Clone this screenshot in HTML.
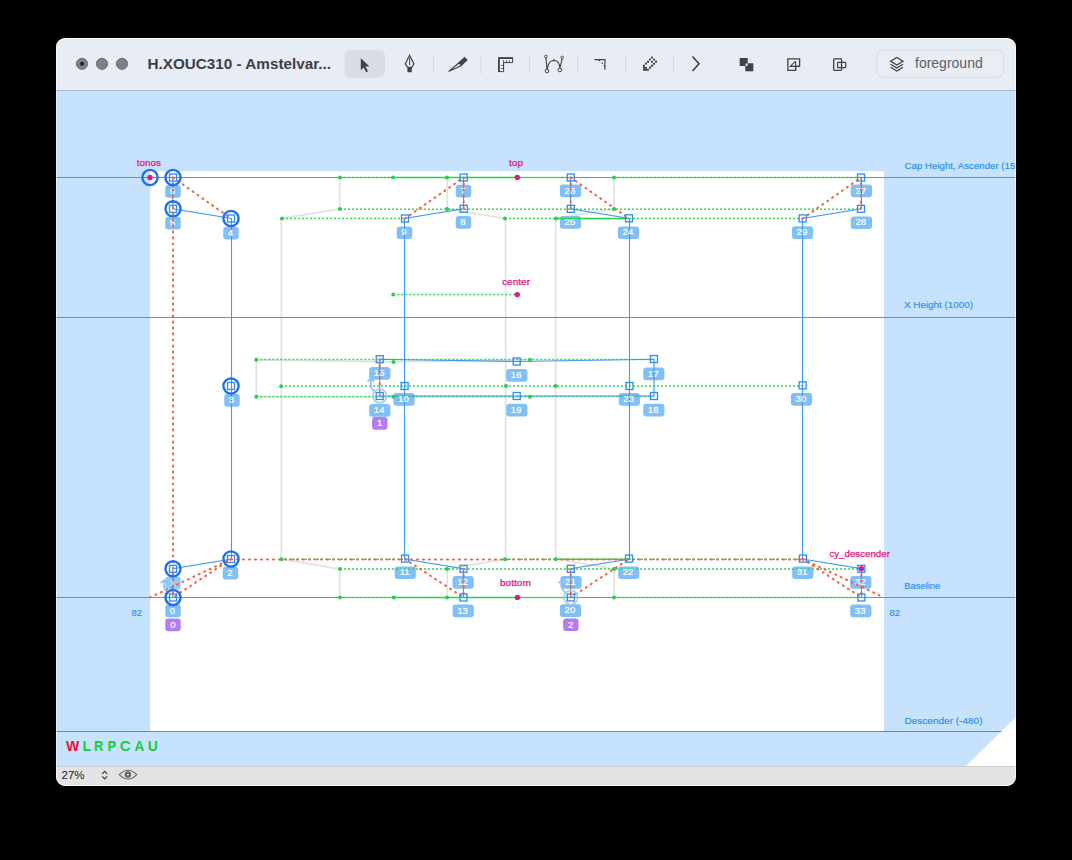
<!DOCTYPE html>
<html><head><meta charset="utf-8"><style>
html,body{margin:0;padding:0;background:#000;width:1072px;height:860px;overflow:hidden;}
svg{position:absolute;left:0;top:0;}
</style></head><body>
<svg width="1072" height="860" viewBox="0 0 1072 860">
<defs><clipPath id="win"><rect x="56" y="38" width="960" height="748" rx="9"/></clipPath></defs>
<rect x="0" y="0" width="1072" height="860" fill="#000"/>
<g clip-path="url(#win)">
<rect x="56" y="91" width="960" height="675" fill="#c7e2fd"/>
<rect x="150" y="171.2" width="734" height="560.3" fill="#ffffff"/>
<polyline points="339.7,177.5 339.7,209 281.3,218.5 281.3,559 339.7,569 339.7,597.5" fill="none" stroke="#e3e3e3" stroke-width="1.8" />
<polyline points="447.2,177.5 447.2,209 505.6,218.5 505.6,559 447.2,569 447.2,597.5" fill="none" stroke="#e3e3e3" stroke-width="1.8" />
<polyline points="614,177.5 614,209 555.7,218.5 555.7,559 614,569 614,597.5" fill="none" stroke="#e3e3e3" stroke-width="1.8" />
<polyline points="393.5,361.9 256.3,359.8 256.3,396.8 393.5,396.8" fill="none" stroke="#e3e3e3" stroke-width="1.8" />
<line x1="393.5" y1="361.9" x2="530" y2="359.7" stroke="#e3e3e3" stroke-width="1.8" />
<line x1="393.5" y1="396.8" x2="530" y2="396.8" stroke="#e3e3e3" stroke-width="1.8" />
<line x1="56" y1="177.5" x2="1016" y2="177.5" stroke="#3a9ef6" stroke-width="1" />
<line x1="56" y1="317.5" x2="1016" y2="317.5" stroke="#3a9ef6" stroke-width="1" />
<line x1="56" y1="597.5" x2="1016" y2="597.5" stroke="#3a9ef6" stroke-width="1" />
<line x1="56" y1="731.5" x2="1016" y2="731.5" stroke="#2e97f5" stroke-width="1" />
<rect x="165.25" y="185" width="15.5" height="12.7" rx="3" fill="#80bff8"/>
<rect x="165.25" y="216.8" width="15.5" height="12.7" rx="3" fill="#80bff8"/>
<rect x="223.25" y="226.9" width="15.5" height="12.7" rx="3" fill="#80bff8"/>
<rect x="455.75" y="184.7" width="15.5" height="12.7" rx="3" fill="#80bff8"/>
<rect x="455.75" y="216" width="15.5" height="12.7" rx="3" fill="#80bff8"/>
<rect x="396.75" y="226.4" width="15.5" height="12.7" rx="3" fill="#80bff8"/>
<rect x="559.9" y="184.5" width="21.2" height="12.7" rx="3" fill="#80bff8"/>
<rect x="559.9" y="216" width="21.2" height="12.7" rx="3" fill="#80bff8"/>
<rect x="617.9" y="226.4" width="21.2" height="12.7" rx="3" fill="#80bff8"/>
<rect x="850.8" y="184.5" width="21.2" height="12.7" rx="3" fill="#80bff8"/>
<rect x="850.8" y="216.4" width="21.2" height="12.7" rx="3" fill="#80bff8"/>
<rect x="791.9" y="226.2" width="21.2" height="12.7" rx="3" fill="#80bff8"/>
<rect x="224.25" y="394" width="15.5" height="12.7" rx="3" fill="#80bff8"/>
<rect x="369.2" y="367" width="21.2" height="12.7" rx="3" fill="#80bff8"/>
<rect x="369.2" y="404" width="21.2" height="12.7" rx="3" fill="#80bff8"/>
<rect x="393.4" y="393" width="21.2" height="12.7" rx="3" fill="#80bff8"/>
<rect x="506.19999999999993" y="369" width="21.2" height="12.7" rx="3" fill="#80bff8"/>
<rect x="506.19999999999993" y="403.8" width="21.2" height="12.7" rx="3" fill="#80bff8"/>
<rect x="643.1999999999999" y="367.5" width="21.2" height="12.7" rx="3" fill="#80bff8"/>
<rect x="643.1999999999999" y="403.8" width="21.2" height="12.7" rx="3" fill="#80bff8"/>
<rect x="618.6999999999999" y="393" width="21.2" height="12.7" rx="3" fill="#80bff8"/>
<rect x="790.9" y="393" width="21.2" height="12.7" rx="3" fill="#80bff8"/>
<rect x="222.75" y="566.7" width="15.5" height="12.7" rx="3" fill="#80bff8"/>
<rect x="165.25" y="576.6" width="15.5" height="12.7" rx="3" fill="#80bff8" opacity="0.85"/>
<rect x="165.25" y="604.6" width="15.5" height="12.7" rx="3" fill="#80bff8"/>
<rect x="394.7" y="566.4" width="21.2" height="12.7" rx="3" fill="#80bff8"/>
<rect x="452.59999999999997" y="576" width="21.2" height="12.7" rx="3" fill="#80bff8"/>
<rect x="452.59999999999997" y="604.5" width="21.2" height="12.7" rx="3" fill="#80bff8"/>
<rect x="560.4" y="576" width="21.2" height="12.7" rx="3" fill="#80bff8"/>
<rect x="618.1" y="566.4" width="21.2" height="12.7" rx="3" fill="#80bff8"/>
<rect x="559.9" y="604.3" width="21.2" height="12.7" rx="3" fill="#80bff8"/>
<rect x="792.1999999999999" y="566.4" width="21.2" height="12.7" rx="3" fill="#80bff8"/>
<rect x="850.1999999999999" y="576" width="21.2" height="12.7" rx="3" fill="#80bff8"/>
<rect x="850.1999999999999" y="604.5" width="21.2" height="12.7" rx="3" fill="#80bff8"/>
<rect x="372.1" y="417" width="15.4" height="12.7" rx="3" fill="#b27cf4"/><text x="379.6" y="426.3" font-family='"Liberation Sans", sans-serif' font-size='9.6' fill='#fff' stroke='#fff' stroke-width='0.2' text-anchor='middle'>1</text>
<rect x="165.3" y="618.6" width="15.4" height="12.7" rx="3" fill="#b27cf4"/><text x="172.8" y="627.9" font-family='"Liberation Sans", sans-serif' font-size='9.6' fill='#fff' stroke='#fff' stroke-width='0.2' text-anchor='middle'>0</text>
<rect x="563.0999999999999" y="618.4" width="15.4" height="12.7" rx="3" fill="#b27cf4"/><text x="570.5999999999999" y="627.6999999999999" font-family='"Liberation Sans", sans-serif' font-size='9.6' fill='#fff' stroke='#fff' stroke-width='0.2' text-anchor='middle'>2</text>
<line x1="393.5" y1="177.5" x2="517.3" y2="177.5" stroke="#22d34c" stroke-width="1.6" />
<line x1="393.7" y1="597.5" x2="517.4" y2="597.5" stroke="#22d34c" stroke-width="1.6" />
<line x1="556" y1="218.5" x2="629" y2="218.5" stroke="#22d34c" stroke-width="1.6" />
<line x1="556" y1="559.3" x2="629" y2="559.3" stroke="#22d34c" stroke-width="1.6" />
<line x1="340" y1="177.5" x2="393.5" y2="177.5" stroke="#2edc55" stroke-width="1.5" stroke-dasharray="2 2"/>
<line x1="517.3" y1="177.5" x2="571" y2="177.5" stroke="#2edc55" stroke-width="1.5" stroke-dasharray="2 2"/>
<line x1="614" y1="177.5" x2="861" y2="177.5" stroke="#2edc55" stroke-width="1.5" stroke-dasharray="2 2"/>
<line x1="340" y1="209.3" x2="861" y2="209.3" stroke="#2edc55" stroke-width="1.5" stroke-dasharray="2 2"/>
<line x1="282" y1="218.5" x2="405" y2="218.5" stroke="#2edc55" stroke-width="1.5" stroke-dasharray="2 2"/>
<line x1="505" y1="218.5" x2="556" y2="218.5" stroke="#2edc55" stroke-width="1.5" stroke-dasharray="2 2"/>
<line x1="629" y1="218.5" x2="803" y2="218.5" stroke="#2edc55" stroke-width="1.5" stroke-dasharray="2 2"/>
<line x1="393.3" y1="294.6" x2="517" y2="294.6" stroke="#2edc55" stroke-width="1.5" stroke-dasharray="2 2"/>
<line x1="256.3" y1="359.6" x2="654" y2="359.6" stroke="#2edc55" stroke-width="1.5" stroke-dasharray="2 2"/>
<line x1="281" y1="386" x2="803" y2="386" stroke="#2edc55" stroke-width="1.5" stroke-dasharray="2 2"/>
<line x1="256.3" y1="396.6" x2="654" y2="396.6" stroke="#2edc55" stroke-width="1.5" stroke-dasharray="2 2"/>
<line x1="281" y1="559.3" x2="405" y2="559.3" stroke="#2edc55" stroke-width="1.5" stroke-dasharray="2 2"/>
<line x1="505" y1="559.3" x2="556" y2="559.3" stroke="#2edc55" stroke-width="1.5" stroke-dasharray="2 2"/>
<line x1="629" y1="559.3" x2="803" y2="559.3" stroke="#2edc55" stroke-width="1.5" stroke-dasharray="2 2"/>
<line x1="340" y1="569" x2="861" y2="569" stroke="#2edc55" stroke-width="1.5" stroke-dasharray="2 2"/>
<line x1="340" y1="597.5" x2="393.7" y2="597.5" stroke="#2edc55" stroke-width="1.5" stroke-dasharray="2 2"/>
<line x1="517.4" y1="597.5" x2="571" y2="597.5" stroke="#2edc55" stroke-width="1.5" stroke-dasharray="2 2"/>
<line x1="614" y1="597.5" x2="861" y2="597.5" stroke="#2edc55" stroke-width="1.5" stroke-dasharray="2 2"/>
<polyline points="172.8,177.5 172.8,208.8 231.5,218.5 231.5,559 172.8,568.8 172.8,597.5" fill="none" stroke="#3a9cf5" stroke-width="1.1" />
<polyline points="463.5,177.5 463.5,208.8 404.5,218.5 404.5,559 463.5,568.8 463.5,597.5" fill="none" stroke="#3a9cf5" stroke-width="1.1" />
<polyline points="570.5,177.5 570.5,208.8 629.5,218.5 629.5,559 570.5,568.8 570.5,597.5" fill="none" stroke="#3a9cf5" stroke-width="1.1" />
<polyline points="861.5,177.5 861.5,208.8 802.5,218.5 802.5,559 861.5,568.8 861.5,597.5" fill="none" stroke="#3a9cf5" stroke-width="1.1" />
<path d="M379.7,359.2 L516.7,361.5 L654,359.2 L654,396 L379.7,396 Z" fill="none" stroke="#3a9cf5" stroke-width="1.1"/>
<text x="172.4" y="194.0" font-family='"Liberation Sans", sans-serif' font-size='9.6' fill='#fff' stroke='#fff' stroke-width='0.2' text-anchor='middle'>6</text>
<text x="172.4" y="225.8" font-family='"Liberation Sans", sans-serif' font-size='9.6' fill='#fff' stroke='#fff' stroke-width='0.2' text-anchor='middle'>5</text>
<text x="230.4" y="235.9" font-family='"Liberation Sans", sans-serif' font-size='9.6' fill='#fff' stroke='#fff' stroke-width='0.2' text-anchor='middle'>4</text>
<text x="462.9" y="193.7" font-family='"Liberation Sans", sans-serif' font-size='9.6' fill='#fff' stroke='#fff' stroke-width='0.2' text-anchor='middle'>7</text>
<text x="462.9" y="225.0" font-family='"Liberation Sans", sans-serif' font-size='9.6' fill='#fff' stroke='#fff' stroke-width='0.2' text-anchor='middle'>8</text>
<text x="403.9" y="235.4" font-family='"Liberation Sans", sans-serif' font-size='9.6' fill='#fff' stroke='#fff' stroke-width='0.2' text-anchor='middle'>9</text>
<text x="569.9" y="193.5" font-family='"Liberation Sans", sans-serif' font-size='9.6' fill='#fff' stroke='#fff' stroke-width='0.2' text-anchor='middle'>26</text>
<text x="569.9" y="225.0" font-family='"Liberation Sans", sans-serif' font-size='9.6' fill='#fff' stroke='#fff' stroke-width='0.2' text-anchor='middle'>25</text>
<text x="627.9" y="235.4" font-family='"Liberation Sans", sans-serif' font-size='9.6' fill='#fff' stroke='#fff' stroke-width='0.2' text-anchor='middle'>24</text>
<text x="860.8" y="193.5" font-family='"Liberation Sans", sans-serif' font-size='9.6' fill='#fff' stroke='#fff' stroke-width='0.2' text-anchor='middle'>27</text>
<text x="860.8" y="225.4" font-family='"Liberation Sans", sans-serif' font-size='9.6' fill='#fff' stroke='#fff' stroke-width='0.2' text-anchor='middle'>28</text>
<text x="801.9" y="235.2" font-family='"Liberation Sans", sans-serif' font-size='9.6' fill='#fff' stroke='#fff' stroke-width='0.2' text-anchor='middle'>29</text>
<text x="231.4" y="403.0" font-family='"Liberation Sans", sans-serif' font-size='9.6' fill='#fff' stroke='#fff' stroke-width='0.2' text-anchor='middle'>3</text>
<text x="379.2" y="376.0" font-family='"Liberation Sans", sans-serif' font-size='9.6' fill='#fff' stroke='#fff' stroke-width='0.2' text-anchor='middle'>15</text>
<text x="379.2" y="413.0" font-family='"Liberation Sans", sans-serif' font-size='9.6' fill='#fff' stroke='#fff' stroke-width='0.2' text-anchor='middle'>14</text>
<text x="403.4" y="402.0" font-family='"Liberation Sans", sans-serif' font-size='9.6' fill='#fff' stroke='#fff' stroke-width='0.2' text-anchor='middle'>10</text>
<text x="516.1999999999999" y="378.0" font-family='"Liberation Sans", sans-serif' font-size='9.6' fill='#fff' stroke='#fff' stroke-width='0.2' text-anchor='middle'>16</text>
<text x="516.1999999999999" y="412.8" font-family='"Liberation Sans", sans-serif' font-size='9.6' fill='#fff' stroke='#fff' stroke-width='0.2' text-anchor='middle'>19</text>
<text x="653.1999999999999" y="376.5" font-family='"Liberation Sans", sans-serif' font-size='9.6' fill='#fff' stroke='#fff' stroke-width='0.2' text-anchor='middle'>17</text>
<text x="653.1999999999999" y="412.8" font-family='"Liberation Sans", sans-serif' font-size='9.6' fill='#fff' stroke='#fff' stroke-width='0.2' text-anchor='middle'>18</text>
<text x="628.6999999999999" y="402.0" font-family='"Liberation Sans", sans-serif' font-size='9.6' fill='#fff' stroke='#fff' stroke-width='0.2' text-anchor='middle'>23</text>
<text x="800.9" y="402.0" font-family='"Liberation Sans", sans-serif' font-size='9.6' fill='#fff' stroke='#fff' stroke-width='0.2' text-anchor='middle'>30</text>
<text x="229.9" y="575.7" font-family='"Liberation Sans", sans-serif' font-size='9.6' fill='#fff' stroke='#fff' stroke-width='0.2' text-anchor='middle'>2</text>
<text x="172.4" y="585.6" font-family='"Liberation Sans", sans-serif' font-size='9.6' fill='#fff' stroke='#fff' stroke-width='0.2' text-anchor='middle' opacity="0.85">1</text>
<text x="172.4" y="613.6" font-family='"Liberation Sans", sans-serif' font-size='9.6' fill='#fff' stroke='#fff' stroke-width='0.2' text-anchor='middle'>0</text>
<text x="404.7" y="575.4" font-family='"Liberation Sans", sans-serif' font-size='9.6' fill='#fff' stroke='#fff' stroke-width='0.2' text-anchor='middle'>11</text>
<text x="462.59999999999997" y="585.0" font-family='"Liberation Sans", sans-serif' font-size='9.6' fill='#fff' stroke='#fff' stroke-width='0.2' text-anchor='middle'>12</text>
<text x="462.59999999999997" y="613.5" font-family='"Liberation Sans", sans-serif' font-size='9.6' fill='#fff' stroke='#fff' stroke-width='0.2' text-anchor='middle'>13</text>
<text x="570.4" y="585.0" font-family='"Liberation Sans", sans-serif' font-size='9.6' fill='#fff' stroke='#fff' stroke-width='0.2' text-anchor='middle'>21</text>
<text x="628.1" y="575.4" font-family='"Liberation Sans", sans-serif' font-size='9.6' fill='#fff' stroke='#fff' stroke-width='0.2' text-anchor='middle'>22</text>
<text x="569.9" y="613.3" font-family='"Liberation Sans", sans-serif' font-size='9.6' fill='#fff' stroke='#fff' stroke-width='0.2' text-anchor='middle'>20</text>
<text x="802.1999999999999" y="575.4" font-family='"Liberation Sans", sans-serif' font-size='9.6' fill='#fff' stroke='#fff' stroke-width='0.2' text-anchor='middle'>31</text>
<text x="860.1999999999999" y="585.0" font-family='"Liberation Sans", sans-serif' font-size='9.6' fill='#fff' stroke='#fff' stroke-width='0.2' text-anchor='middle'>32</text>
<text x="860.1999999999999" y="613.5" font-family='"Liberation Sans", sans-serif' font-size='9.6' fill='#fff' stroke='#fff' stroke-width='0.2' text-anchor='middle'>33</text>
<line x1="173" y1="177.5" x2="173" y2="597.5" stroke="#f4664a" stroke-width="2.1" stroke-dasharray="1 5" stroke-linecap="round"/>
<line x1="173" y1="177.5" x2="231" y2="218.5" stroke="#f4664a" stroke-width="2.1" stroke-dasharray="1 5" stroke-linecap="round"/>
<line x1="231" y1="559" x2="173" y2="597.5" stroke="#f4664a" stroke-width="2.1" stroke-dasharray="1 5" stroke-linecap="round"/>
<line x1="150" y1="597.5" x2="231" y2="559" stroke="#f4664a" stroke-width="2.1" stroke-dasharray="1 5" stroke-linecap="round"/>
<line x1="231" y1="559.5" x2="803" y2="559.5" stroke="#f4664a" stroke-width="2.1" stroke-dasharray="1 5" stroke-linecap="round"/>
<line x1="405" y1="218.5" x2="463.7" y2="177.5" stroke="#f4664a" stroke-width="2.1" stroke-dasharray="1 5" stroke-linecap="round"/>
<line x1="463.7" y1="177.5" x2="463.7" y2="208.8" stroke="#f4664a" stroke-width="2.1" stroke-dasharray="1 5" stroke-linecap="round"/>
<line x1="405" y1="559" x2="463.5" y2="597.5" stroke="#f4664a" stroke-width="2.1" stroke-dasharray="1 5" stroke-linecap="round"/>
<line x1="463.5" y1="568.8" x2="463.5" y2="597.5" stroke="#f4664a" stroke-width="2.1" stroke-dasharray="1 5" stroke-linecap="round"/>
<line x1="570.8" y1="177.5" x2="629" y2="218.5" stroke="#f4664a" stroke-width="2.1" stroke-dasharray="1 5" stroke-linecap="round"/>
<line x1="570.8" y1="177.5" x2="570.8" y2="208.8" stroke="#f4664a" stroke-width="2.1" stroke-dasharray="1 5" stroke-linecap="round"/>
<line x1="570.8" y1="597.5" x2="629" y2="559" stroke="#f4664a" stroke-width="2.1" stroke-dasharray="1 5" stroke-linecap="round"/>
<line x1="570.8" y1="568.8" x2="570.8" y2="597.5" stroke="#f4664a" stroke-width="2.1" stroke-dasharray="1 5" stroke-linecap="round"/>
<line x1="802.7" y1="218.5" x2="861" y2="177.5" stroke="#f4664a" stroke-width="2.1" stroke-dasharray="1 5" stroke-linecap="round"/>
<line x1="861" y1="177.5" x2="861" y2="208.8" stroke="#f4664a" stroke-width="2.1" stroke-dasharray="1 5" stroke-linecap="round"/>
<line x1="802.7" y1="559" x2="861.4" y2="597.5" stroke="#f4664a" stroke-width="2.1" stroke-dasharray="1 5" stroke-linecap="round"/>
<line x1="802.7" y1="559" x2="884" y2="597.5" stroke="#f4664a" stroke-width="2.1" stroke-dasharray="1 5" stroke-linecap="round"/>
<line x1="861.4" y1="568.8" x2="861.4" y2="597.5" stroke="#f4664a" stroke-width="2.1" stroke-dasharray="1 5" stroke-linecap="round"/>
<line x1="379.7" y1="359.2" x2="379.7" y2="396" stroke="#f4664a" stroke-width="2.1" stroke-dasharray="1 5" stroke-linecap="round"/>
<circle cx="340" cy="177.5" r="2" fill="#22d34c"/>
<circle cx="393" cy="177.5" r="2" fill="#22d34c"/>
<circle cx="447" cy="177.5" r="2" fill="#22d34c"/>
<circle cx="614" cy="177.5" r="2" fill="#22d34c"/>
<circle cx="340" cy="209" r="2" fill="#22d34c"/>
<circle cx="447" cy="209" r="2" fill="#22d34c"/>
<circle cx="614" cy="209" r="2" fill="#22d34c"/>
<circle cx="282" cy="218.5" r="2" fill="#22d34c"/>
<circle cx="505" cy="218.5" r="2" fill="#22d34c"/>
<circle cx="556" cy="218.5" r="2" fill="#22d34c"/>
<circle cx="393.3" cy="294.6" r="2" fill="#22d34c"/>
<circle cx="256.3" cy="359.8" r="2" fill="#22d34c"/>
<circle cx="393.5" cy="361.9" r="2" fill="#22d34c"/>
<circle cx="530" cy="359.7" r="2" fill="#22d34c"/>
<circle cx="281.2" cy="386.2" r="2" fill="#22d34c"/>
<circle cx="506" cy="386" r="2" fill="#22d34c"/>
<circle cx="555.5" cy="386" r="2" fill="#22d34c"/>
<circle cx="256.3" cy="396.8" r="2" fill="#22d34c"/>
<circle cx="393.5" cy="396.8" r="2" fill="#22d34c"/>
<circle cx="530" cy="396.8" r="2" fill="#22d34c"/>
<circle cx="281.4" cy="559.3" r="2" fill="#22d34c"/>
<circle cx="505" cy="559.3" r="2" fill="#22d34c"/>
<circle cx="555.8" cy="559.3" r="2" fill="#22d34c"/>
<circle cx="340" cy="569" r="2" fill="#22d34c"/>
<circle cx="447" cy="569" r="2" fill="#22d34c"/>
<circle cx="614" cy="569" r="2" fill="#22d34c"/>
<circle cx="340" cy="597.5" r="2" fill="#22d34c"/>
<circle cx="393.7" cy="597.5" r="2" fill="#22d34c"/>
<circle cx="447" cy="597.5" r="2" fill="#22d34c"/>
<circle cx="614" cy="597.5" r="2" fill="#22d34c"/>
<circle cx="150" cy="177.5" r="2.7" fill="#e8158a"/>
<circle cx="517.3" cy="177.5" r="2.7" fill="#e8158a"/>
<circle cx="517.3" cy="294.6" r="2.7" fill="#e8158a"/>
<circle cx="517.4" cy="597.5" r="2.7" fill="#e8158a"/>
<circle cx="861.4" cy="568.8" r="2.7" fill="#e8158a"/>
<circle cx="379.7" cy="396" r="6.9" fill="none" stroke="#9fcbf8" stroke-width="1.5"/>
<path d="M374.4,391.2 Q370.8,388.5 370.8,384.5 L370.8,379 M367.5,381.7 L370.8,378.7 L374.09999999999997,381.7" fill="none" stroke="#8cc3f8" stroke-width="1.7"/>
<circle cx="570.8" cy="597.5" r="6.9" fill="none" stroke="#9fcbf8" stroke-width="1.5"/>
<path d="M565.5,592.7 Q561.9,590.0 561.9,586.0 L561.9,580.5 M558.5999999999999,583.2 L561.9,580.2 L565.1999999999999,583.2" fill="none" stroke="#8cc3f8" stroke-width="1.7"/>
<circle cx="173" cy="597.5" r="6.9" fill="none" stroke="#9fcbf8" stroke-width="1.5"/>
<path d="M167.7,592.7 Q164.1,590.0 164.1,586.0 L164.1,580.5 M160.8,583.2 L164.1,580.2 L167.4,583.2" fill="none" stroke="#8cc3f8" stroke-width="1.7"/>
<rect x="169.5" y="594.0" width="7" height="7" fill="none" stroke="#2a8ef2" stroke-width="1.3"/>
<rect x="169.5" y="565.3" width="7" height="7" fill="none" stroke="#2a8ef2" stroke-width="1.3"/>
<rect x="227.5" y="555.5" width="7" height="7" fill="none" stroke="#2a8ef2" stroke-width="1.3"/>
<rect x="227.5" y="382.5" width="7" height="7" fill="none" stroke="#2a8ef2" stroke-width="1.3"/>
<rect x="227.5" y="215.0" width="7" height="7" fill="none" stroke="#2a8ef2" stroke-width="1.3"/>
<rect x="169.5" y="205.3" width="7" height="7" fill="none" stroke="#2a8ef2" stroke-width="1.3"/>
<rect x="169.5" y="174.0" width="7" height="7" fill="none" stroke="#2a8ef2" stroke-width="1.3"/>
<rect x="460.2" y="174.0" width="7" height="7" fill="none" stroke="#2a8ef2" stroke-width="1.3"/>
<rect x="460.2" y="205.3" width="7" height="7" fill="none" stroke="#2a8ef2" stroke-width="1.3"/>
<rect x="401.5" y="215.0" width="7" height="7" fill="none" stroke="#2a8ef2" stroke-width="1.3"/>
<rect x="401.1" y="382.5" width="7" height="7" fill="none" stroke="#2a8ef2" stroke-width="1.3"/>
<rect x="401.5" y="555.1" width="7" height="7" fill="none" stroke="#2a8ef2" stroke-width="1.3"/>
<rect x="460.0" y="565.3" width="7" height="7" fill="none" stroke="#2a8ef2" stroke-width="1.3"/>
<rect x="460.0" y="594.0" width="7" height="7" fill="none" stroke="#2a8ef2" stroke-width="1.3"/>
<rect x="376.2" y="392.5" width="7" height="7" fill="none" stroke="#2a8ef2" stroke-width="1.3"/>
<rect x="376.2" y="355.7" width="7" height="7" fill="none" stroke="#2a8ef2" stroke-width="1.3"/>
<rect x="513.2" y="358.0" width="7" height="7" fill="none" stroke="#2a8ef2" stroke-width="1.3"/>
<rect x="650.5" y="355.5" width="7" height="7" fill="none" stroke="#2a8ef2" stroke-width="1.3"/>
<rect x="650.5" y="392.5" width="7" height="7" fill="none" stroke="#2a8ef2" stroke-width="1.3"/>
<rect x="513.2" y="392.5" width="7" height="7" fill="none" stroke="#2a8ef2" stroke-width="1.3"/>
<rect x="567.3" y="594.0" width="7" height="7" fill="none" stroke="#2a8ef2" stroke-width="1.3"/>
<rect x="567.3" y="565.3" width="7" height="7" fill="none" stroke="#2a8ef2" stroke-width="1.3"/>
<rect x="625.5" y="555.1" width="7" height="7" fill="none" stroke="#2a8ef2" stroke-width="1.3"/>
<rect x="626.0" y="382.5" width="7" height="7" fill="none" stroke="#2a8ef2" stroke-width="1.3"/>
<rect x="625.5" y="214.8" width="7" height="7" fill="none" stroke="#2a8ef2" stroke-width="1.3"/>
<rect x="567.3" y="205.3" width="7" height="7" fill="none" stroke="#2a8ef2" stroke-width="1.3"/>
<rect x="567.3" y="174.0" width="7" height="7" fill="none" stroke="#2a8ef2" stroke-width="1.3"/>
<rect x="857.5" y="174.0" width="7" height="7" fill="none" stroke="#2a8ef2" stroke-width="1.3"/>
<rect x="857.5" y="205.3" width="7" height="7" fill="none" stroke="#2a8ef2" stroke-width="1.3"/>
<rect x="799.2" y="214.9" width="7" height="7" fill="none" stroke="#2a8ef2" stroke-width="1.3"/>
<rect x="799.1" y="381.9" width="7" height="7" fill="none" stroke="#2a8ef2" stroke-width="1.3"/>
<rect x="799.4" y="555.1" width="7" height="7" fill="none" stroke="#2a8ef2" stroke-width="1.3"/>
<rect x="857.9" y="565.3" width="7" height="7" fill="none" stroke="#2a8ef2" stroke-width="1.3"/>
<rect x="857.9" y="594.0" width="7" height="7" fill="none" stroke="#2a8ef2" stroke-width="1.3"/>
<circle cx="150" cy="177.5" r="7.6" fill="none" stroke="#1f6ff0" stroke-width="2.4"/>
<circle cx="173" cy="177.5" r="7.6" fill="none" stroke="#1f6ff0" stroke-width="2.4"/>
<circle cx="173" cy="208.8" r="7.6" fill="none" stroke="#1f6ff0" stroke-width="2.4"/>
<circle cx="231" cy="218.5" r="7.6" fill="none" stroke="#1f6ff0" stroke-width="2.4"/>
<circle cx="231" cy="386" r="7.6" fill="none" stroke="#1f6ff0" stroke-width="2.4"/>
<circle cx="231" cy="559" r="7.6" fill="none" stroke="#1f6ff0" stroke-width="2.4"/>
<circle cx="173" cy="568.8" r="7.6" fill="none" stroke="#1f6ff0" stroke-width="2.4"/>
<circle cx="173" cy="597.5" r="7.6" fill="none" stroke="#1f6ff0" stroke-width="2.4"/>
<text x="136.8" y="166.2" textLength="24.2" lengthAdjust="spacingAndGlyphs" font-family='"Liberation Sans", sans-serif' font-size="9.6" fill="#e8158a" stroke="#e8158a" stroke-width="0.25">tonos</text>
<text x="509" y="166.3" textLength="14" lengthAdjust="spacingAndGlyphs" font-family='"Liberation Sans", sans-serif' font-size="9.6" fill="#e8158a" stroke="#e8158a" stroke-width="0.25">top</text>
<text x="502" y="284.9" textLength="28" lengthAdjust="spacingAndGlyphs" font-family='"Liberation Sans", sans-serif' font-size="9.6" fill="#e8158a" stroke="#e8158a" stroke-width="0.25">center</text>
<text x="500" y="586.3" textLength="30.8" lengthAdjust="spacingAndGlyphs" font-family='"Liberation Sans", sans-serif' font-size="9.6" fill="#e8158a" stroke="#e8158a" stroke-width="0.25">bottom</text>
<text x="829.4" y="557.4" textLength="60.5" lengthAdjust="spacingAndGlyphs" font-family='"Liberation Sans", sans-serif' font-size="9.6" fill="#e8158a" stroke="#e8158a" stroke-width="0.25">cy_descender</text>
<text x="904.6" y="168.6" textLength="124.7" lengthAdjust="spacingAndGlyphs" font-family='"Liberation Sans", sans-serif' font-size="9.4" fill="#2a8ff5" stroke="#2a8ff5" stroke-width="0.15">Cap Height, Ascender (1500)</text>
<text x="904" y="308.3" textLength="69" lengthAdjust="spacingAndGlyphs" font-family='"Liberation Sans", sans-serif' font-size="9.4" fill="#2a8ff5" stroke="#2a8ff5" stroke-width="0.15">X Height (1000)</text>
<text x="904.3" y="589" textLength="36" lengthAdjust="spacingAndGlyphs" font-family='"Liberation Sans", sans-serif' font-size="9.4" fill="#2a8ff5" stroke="#2a8ff5" stroke-width="0.15">Baseline</text>
<text x="904.5" y="724.2" textLength="78" lengthAdjust="spacingAndGlyphs" font-family='"Liberation Sans", sans-serif' font-size="9.4" fill="#2a8ff5" stroke="#2a8ff5" stroke-width="0.15">Descender (-480)</text>
<text x="131.6" y="616.2" textLength="10.5" lengthAdjust="spacingAndGlyphs" font-family='"Liberation Sans", sans-serif' font-size="9.4" fill="#2a8ff5" stroke="#2a8ff5" stroke-width="0.15">82</text>
<text x="889.4" y="615.9" textLength="10.5" lengthAdjust="spacingAndGlyphs" font-family='"Liberation Sans", sans-serif' font-size="9.4" fill="#2a8ff5" stroke="#2a8ff5" stroke-width="0.15">82</text>
<polygon points="1016,717 966,766 1016,766" fill="#ffffff"/>
<text transform="translate(66,751) scale(0.93,1)" x="0" y="0" font-family='"Liberation Sans", sans-serif' font-weight="bold" font-size="15.1" fill="#f5102f">W</text>
<text transform="translate(82.6,751) scale(0.94,1)" x="0" y="0" font-family='"Liberation Sans", sans-serif' font-weight="bold" font-size="15.1" fill="#14cf3c">L</text>
<text transform="translate(94.1,751) scale(0.86,1)" x="0" y="0" font-family='"Liberation Sans", sans-serif' font-weight="bold" font-size="15.1" fill="#14cf3c">R</text>
<text transform="translate(107.6,751) scale(0.87,1)" x="0" y="0" font-family='"Liberation Sans", sans-serif' font-weight="bold" font-size="15.1" fill="#14cf3c">P</text>
<text transform="translate(119.7,751) scale(1.0,1)" x="0" y="0" font-family='"Liberation Sans", sans-serif' font-weight="bold" font-size="15.1" fill="#14cf3c">C</text>
<text transform="translate(134.4,751) scale(0.89,1)" x="0" y="0" font-family='"Liberation Sans", sans-serif' font-weight="bold" font-size="15.1" fill="#14cf3c">A</text>
<text transform="translate(147.7,751) scale(0.93,1)" x="0" y="0" font-family='"Liberation Sans", sans-serif' font-weight="bold" font-size="15.1" fill="#14cf3c">U</text>
<rect x="56" y="766" width="960" height="20" fill="#e3e3e3"/>
<line x1="56" y1="766.5" x2="1016" y2="766.5" stroke="#cfcfcf" stroke-width="1" />
<text x="61.5" y="779.3" font-family='"Liberation Sans", sans-serif' font-size="11.5" fill="#222">27%</text>
<path d="M102.2,773.8 L104.7,771.3 L107.2,773.8 M102.2,776.3 L104.7,778.8 L107.2,776.3" fill="none" stroke="#3a3a3a" stroke-width="1.2"/>
<path d="M119.3,774.6 Q128,765.8 136.8,774.6 Q128,783.4 119.3,774.6 Z" fill="none" stroke="#6a6a6a" stroke-width="1.1"/><circle cx="127.9" cy="774.6" r="3.3" fill="#6a6a6a"/><circle cx="127.9" cy="774.6" r="0.9" fill="#f4f4f4"/>
<rect x="56" y="38" width="960" height="52" fill="#e8ecf4"/>
<line x1="56" y1="90.5" x2="1016" y2="90.5" stroke="#9fbad3" stroke-width="1" />
<circle cx="82" cy="63.8" r="5.6" fill="#7b8089" stroke="#5e636b" stroke-width="0.8"/>
<circle cx="102" cy="63.8" r="5.6" fill="#7b8089" stroke="#5e636b" stroke-width="0.8"/>
<circle cx="122" cy="63.8" r="5.6" fill="#7b8089" stroke="#5e636b" stroke-width="0.8"/>
<circle cx="82" cy="63.8" r="2" fill="#1d2128"/>
<text x="147.5" y="68.9" textLength="183.5" lengthAdjust="spacingAndGlyphs" font-family='"Liberation Sans", sans-serif' font-weight="bold" font-size="14.6" fill="#3c3f45">H.XOUC310 - Amstelvar...</text>
<rect x="344.5" y="49.8" width="40.5" height="28" rx="6" fill="#d9dde6"/>
<path d="M360.8,58.2 L360.8,70.2 L363.6,67.4 L366.2,72.2 L368,71.3 L365.5,66.6 L369.3,66.3 Z" fill="#3f4248"/>
<path d="M409.6,55.3 L413.9,64 L411.6,67.4 L407.6,67.4 L405.3,64 Z" fill="none" stroke="#3f4248" stroke-width="1.2"/><line x1="409.6" y1="58" x2="409.6" y2="65" stroke="#3f4248" stroke-width="1"/><rect x="407.4" y="68" width="4.4" height="4.3" rx="0.6" fill="#3f4248"/>
<line x1="433.5" y1="55" x2="433.5" y2="73.5" stroke="#d3d7de" stroke-width="1" />
<line x1="481" y1="55" x2="481" y2="73.5" stroke="#d3d7de" stroke-width="1" />
<line x1="529.4" y1="55" x2="529.4" y2="73.5" stroke="#d3d7de" stroke-width="1" />
<line x1="577.6" y1="55" x2="577.6" y2="73.5" stroke="#d3d7de" stroke-width="1" />
<line x1="625.7" y1="55" x2="625.7" y2="73.5" stroke="#d3d7de" stroke-width="1" />
<line x1="673.4" y1="55" x2="673.4" y2="73.5" stroke="#d3d7de" stroke-width="1" />
<path d="M449,71.2 L459.6,62.2 L461.2,65.8 Z" fill="none" stroke="#3f4248" stroke-width="1.2" stroke-linejoin="round"/><line x1="460.2" y1="64" x2="466.2" y2="58.3" stroke="#3f4248" stroke-width="4.6"/>
<path d="M498.9,71.6 L498.9,58 L512.6,58 L512.6,62.6 L503.6,62.6 L503.6,71.6 Z" fill="#f7f8fb" stroke="#3f4248" stroke-width="1"/><path d="M498.2,58.1 L512.9,58.1 M498.9,57.4 L498.9,71.9" stroke="#3f4248" stroke-width="1.7"/><path d="M503.4,60.2 V62.4 M506.4,60.2 V62.4 M509.3,60.2 V62.4 M501.2,65.4 H503.5 M501.2,68.4 H503.5" stroke="#3f4248" stroke-width="1"/>
<path d="M545.9,57.6 L547,69.2 M562.2,58.6 L559.8,68.4 M547.3,68.8 C548.3,63 551,60.6 553,60.5 M555.2,60.5 C557.5,61 559.3,63.5 559.8,67.6" fill="none" stroke="#3f4248" stroke-width="1.1"/><circle cx="545.9" cy="56.4" r="1.3" fill="none" stroke="#3f4248" stroke-width="0.9"/><circle cx="562.2" cy="57.4" r="1.3" fill="none" stroke="#3f4248" stroke-width="0.9"/><circle cx="547" cy="71" r="1.8" fill="none" stroke="#3f4248" stroke-width="1"/><circle cx="559.8" cy="70" r="1.8" fill="none" stroke="#3f4248" stroke-width="1"/><circle cx="554" cy="60.4" r="1.1" fill="#3f4248"/>
<path d="M594.4,59.6 L605.6,59.6" fill="none" stroke="#3f4248" stroke-width="1.4"/><path d="M604.9,59.6 L604.9,69.8" fill="none" stroke="#6d7178" stroke-width="1.6"/><circle cx="599.3" cy="60.6" r="0.8" fill="#3f4248"/><circle cx="602.2" cy="63.2" r="0.8" fill="#3f4248"/><circle cx="604.3" cy="66" r="0.8" fill="#3f4248"/>
<rect x="651" y="56.7" width="2" height="2" fill="#3f4248"/><rect x="649" y="58.7" width="2" height="2" fill="#3f4248"/><rect x="653" y="58.7" width="2" height="2" fill="#3f4248"/><rect x="647" y="60.7" width="2" height="2" fill="#3f4248"/><rect x="651" y="60.7" width="2" height="2" fill="#3f4248"/><rect x="655" y="60.7" width="2" height="2" fill="#3f4248"/><rect x="645" y="62.7" width="2" height="2" fill="#3f4248"/><rect x="653" y="62.7" width="2" height="2" fill="#3f4248"/><rect x="643" y="64.7" width="2" height="2" fill="#3f4248"/><rect x="651" y="64.7" width="2" height="2" fill="#3f4248"/><rect x="643" y="66.7" width="2" height="2" fill="#3f4248"/><rect x="645" y="66.7" width="2" height="2" fill="#3f4248"/><rect x="649" y="66.7" width="2" height="2" fill="#3f4248"/><rect x="643" y="68.7" width="2" height="2" fill="#3f4248"/><rect x="645" y="68.7" width="2" height="2" fill="#3f4248"/><rect x="647" y="68.7" width="2" height="2" fill="#3f4248"/><rect x="651" y="58.7" width="2" height="2" fill="#fafbfd"/><rect x="649" y="60.7" width="2" height="2" fill="#fafbfd"/><rect x="653" y="60.7" width="2" height="2" fill="#fafbfd"/><rect x="645" y="64.7" width="2" height="2" fill="#fafbfd"/><rect x="647" y="66.7" width="2" height="2" fill="#fafbfd"/>
<path d="M692.5,56.5 L699,63.8 L692.5,71" fill="none" stroke="#3f4248" stroke-width="1.6"/>
<rect x="739.7" y="58" width="8" height="8" fill="#3f4248"/><rect x="745.3" y="63.3" width="8" height="8" fill="#3f4248"/><rect x="745.5" y="63.5" width="2.2" height="2.3" fill="#e8ecf4"/>
<path d="M787.9,58.9 L799.6,58.9 L799.6,66.4 L795.6,66.4 L795.6,70.4 L787.9,70.4 Z" fill="none" stroke="#3f4248" stroke-width="1.3"/><path d="M795.6,61.2 L790.3,66.4 L799.6,66.4 M795.6,61.2 L795.6,70.4" fill="none" stroke="#3f4248" stroke-width="1.1"/>
<rect x="833.7" y="58.9" width="7.9" height="11.5" rx="0.8" fill="none" stroke="#3f4248" stroke-width="1.3"/><rect x="837.6" y="62.3" width="8.1" height="5.3" rx="0.6" fill="none" stroke="#3f4248" stroke-width="1.2"/>
<rect x="876.8" y="50.3" width="126.7" height="27" rx="6" fill="#e9edf4" stroke="#d6dae1" stroke-width="1"/>
<path d="M896.8,57.5 L903,61.3 L896.8,65 L890.6,61.3 Z" fill="none" stroke="#3f4248" stroke-width="1.3"/><path d="M890.6,64.3 L896.8,68 L903,64.3 M890.6,67.3 L896.8,71 L903,67.3" fill="none" stroke="#3f4248" stroke-width="1.3"/>
<text x="915" y="68.3" font-family='"Liberation Sans", sans-serif' font-size="14" fill="#5c6068">foreground</text>
</g>
<rect x="56.5" y="38.5" width="959" height="747" rx="8.5" fill="none" stroke="rgba(255,255,255,0.55)" stroke-width="1"/>
</svg>
</body></html>
